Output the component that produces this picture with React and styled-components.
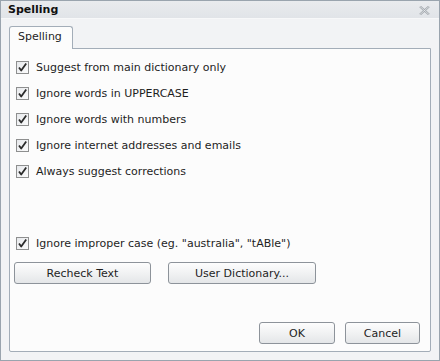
import styled, { createGlobalStyle } from 'styled-components'

const Global = createGlobalStyle`
    html, body {
        margin: 0;
        padding: 0;
        background: #fff;
    }
    * {
        box-sizing: border-box;
    }
`

const options = [
    "Suggest from main dictionary only",
    "Ignore words in UPPERCASE",
    "Ignore words with numbers",
    "Ignore internet addresses and emails",
    "Always suggest corrections",
]

const Check = ({ label }) => (
    <Row>
        <Box>
            <svg width="11" height="11" viewBox="0 0 11 11">
                <path d="M2 5.5 L4.2 8.6 L9.2 1.6" fill="none" stroke="#2b2b2b" strokeWidth="1.8" strokeLinejoin="round" />
            </svg>
        </Box>
        <Label>{label}</Label>
    </Row>
)

const App = () => {
    return (
        <Window>
            <Global />
            <TitleBar>
                <Title>Spelling</Title>
                <Close>
                    <svg width="11" height="9" viewBox="0 0 11 9">
                        <path d="M1 0.5 L10 8.5 M10 0.5 L1 8.5" stroke="#a2a7ad" strokeWidth="2.2" />
                        <path d="M1 0.5 L10 8.5 M10 0.5 L1 8.5" stroke="#eef0f2" strokeWidth="0.7" />
                    </svg>
                </Close>
            </TitleBar>
            <Body>
                <Tabs>
                    <Tab>Spelling</Tab>
                </Tabs>
                <Panel>
                    <List>
                        {options.map(o => <Check key={o} label={o} />)}
                    </List>
                    <Lower>
                        <Check label={'Ignore improper case (eg. "australia", "tABle")'} />
                        <ButtonRow>
                            <Button w={137}>Recheck Text</Button>
                            <Button w={148}>User Dictionary...</Button>
                        </ButtonRow>
                    </Lower>
                    <Footer>
                        <Button w={76}>OK</Button>
                        <Button w={75}>Cancel</Button>
                    </Footer>
                </Panel>
            </Body>
        </Window>
    )
}

export default App

const Window = styled.div`
    width: 440px;
    height: 361px;
    display: flex;
    flex-direction: column;
    border: 1px solid #9aa4ae;
    background: #eef0f3;
    font-family: "DejaVu Sans", Verdana, sans-serif;
    font-size: 11px;
    color: #1e1e1e;
`

const TitleBar = styled.div`
    height: 18px;
    flex: none;
    display: flex;
    align-items: center;
    justify-content: space-between;
    padding: 0 9px 0 7px;
    background: linear-gradient(#e9ebee, #e1e4e8);
    border-bottom: 1px solid #f7f8f9;
`

const Title = styled.div`
    font-weight: bold;
    font-size: 11px;
    color: #111;
`

const Close = styled.div`
    display: flex;
    align-items: center;
    margin-top: 1px;
`

const Body = styled.div`
    flex: 1;
    display: flex;
    flex-direction: column;
    padding: 7px 8px 8px 8px;
    background: #f2f3f5;
`

const Tabs = styled.div`
    display: flex;
    height: 22px;
    flex: none;
`

const Tab = styled.div`
    width: 64px;
    height: 23px;
    padding: 3px 0 0 8px;
    border: 1px solid #a3adb8;
    border-bottom: none;
    border-radius: 3px 3px 0 0;
    background: #fcfcfc;
    position: relative;
    z-index: 1;
    color: #1e1e1e;
`

const Panel = styled.div`
    flex: 1;
    display: flex;
    flex-direction: column;
    border: 1px solid #a3adb8;
    border-radius: 0 0 2px 2px;
    background: #fcfcfc;
    padding: 12px 10px 7px 6px;
`

const List = styled.div`
    display: flex;
    flex-direction: column;
    gap: 13px;
`

const Row = styled.label`
    display: flex;
    align-items: center;
    gap: 7px;
    height: 13px;
`

const Box = styled.span`
    width: 13px;
    height: 13px;
    flex: none;
    display: flex;
    align-items: center;
    justify-content: center;
    border: 1px solid #8e8f8f;
    background: linear-gradient(135deg, #e7e9ec, #fbfbfb);
`

const Label = styled.span`
    white-space: nowrap;
`

const Lower = styled.div`
    margin-top: 59px;
    display: flex;
    flex-direction: column;
    gap: 12px;
`

const ButtonRow = styled.div`
    display: flex;
    gap: 17px;
    margin-left: -2px;
`

const Button = styled.div`
    width: ${p => p.w}px;
    height: 22px;
    display: flex;
    align-items: center;
    justify-content: center;
    border: 1px solid #8d939a;
    border-radius: 3px;
    background: linear-gradient(#fdfdfd 0%, #f1f2f3 50%, #e4e6e8 100%);
    color: #1e1e1e;
`

const Footer = styled.div`
    margin-top: auto;
    display: flex;
    justify-content: flex-end;
    gap: 10px;
`
